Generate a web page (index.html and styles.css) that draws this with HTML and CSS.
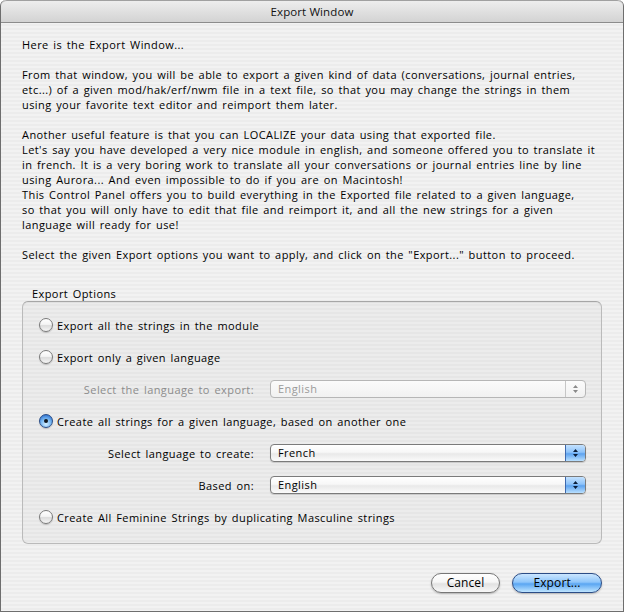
FILE: index.html
```html
<!DOCTYPE html>
<html>
<head>
<meta charset="utf-8">
<title>Export Window</title>
<link rel="stylesheet" href="styles.css">
</head>
<body>
<div class="window">
  <div class="titlebar">Export Window</div>
  <div class="content">
    <p>Here is the Export Window...</p>
    <p>From that window, you will be able to export a given kind of data (conversations, journal entries,<br>etc...) of a given mod/hak/erf/nwm file in a text file, so that you may change the strings in them<br>using your favorite text editor and reimport them later.</p>
    <p>Another useful feature is that you can LOCALIZE your data using that exported file.<br>Let's say you have developed a very nice module in english, and someone offered you to translate it<br>in french. It is a very boring work to translate all your conversations or journal entries line by line<br>using Aurora... And even impossible to do if you are on Macintosh!<br>This Control Panel offers you to build everything in the Exported file related to a given language,<br>so that you will only have to edit that file and reimport it, and all the new strings for a given<br>language will ready for use!</p>
    <p>Select the given Export options you want to apply, and click on the "Export..." button to proceed.</p>

    <div class="group">
      <div class="group-label">Export Options</div>
      <div class="group-box">
        <div class="row"><span class="radio"></span><span class="row-text">Export all the strings in the module</span></div>
        <div class="row"><span class="radio"></span><span class="row-text">Export only a given language</span></div>
        <div class="row field disabled">
          <span class="field-label">Select the language to export:</span>
          <div class="popup"><span class="popup-value">English</span><span class="popup-arrows"><svg width="7" height="10" viewBox="0 0 7 10"><path d="M3.5 1 L6 4 H1 Z M3.5 9 L6 6 H1 Z"/></svg></span></div>
        </div>
        <div class="row"><span class="radio on"></span><span class="row-text">Create all strings for a given language, based on another one</span></div>
        <div class="row field">
          <span class="field-label">Select language to create:</span>
          <div class="popup"><span class="popup-value">French</span><span class="popup-arrows"><svg width="7" height="10" viewBox="0 0 7 10"><path d="M3.5 1 L6 4 H1 Z M3.5 9 L6 6 H1 Z"/></svg></span></div>
        </div>
        <div class="row field">
          <span class="field-label">Based on:</span>
          <div class="popup"><span class="popup-value">English</span><span class="popup-arrows"><svg width="7" height="10" viewBox="0 0 7 10"><path d="M3.5 1 L6 4 H1 Z M3.5 9 L6 6 H1 Z"/></svg></span></div>
        </div>
        <div class="row"><span class="radio"></span><span class="row-text">Create All Feminine Strings by duplicating Masculine strings</span></div>
      </div>
    </div>

    <div class="buttons">
      <button class="btn cancel">Cancel</button>
      <button class="btn default">Export...</button>
    </div>
  </div>
</div>
</body>
</html>
```
FILE: styles.css
```css
html, body {
  margin: 0;
  padding: 0;
  background: #ffffff;
}
body {
  font-family: "Open Sans", "DejaVu Sans", sans-serif;
  font-size: 11px;
  letter-spacing: 0.42px;
  word-spacing: 1.3px;
  color: #000;
}
.window {
  width: 624px;
  height: 612px;
  box-sizing: border-box;
  border: 1px solid #6e6e6e;
  border-top: none;
  border-radius: 6px 6px 0 0;
  overflow: hidden;
  background: repeating-linear-gradient(to bottom, #ececec 0, #ececec 2px, #f2f2f2 2px, #f2f2f2 4px);
}
.titlebar {
  box-sizing: border-box;
  height: 23px;
  line-height: 21px;
  text-align: center;
  font-size: 11.5px;
  letter-spacing: 0.1px;
  word-spacing: 0;
  color: #111;
  background: linear-gradient(to bottom, #ededed, #d3d3d3);
  border-top: 1px solid #a0a0a0;
  border-bottom: 1px solid #8c8c8c;
  border-radius: 6px 6px 0 0;
}
.content {
  padding: 14px 21px 0 21px;
  line-height: 15px;
}
.content p {
  margin: 0 0 15px 0;
  white-space: nowrap;
}
.group {
  margin-top: 24px;
}
.group-label {
  padding-left: 10px;
  line-height: 15px;
}
.group-box {
  border: 1px solid #bababa;
  border-top-color: #a6a6a6;
  border-radius: 6px;
  background: rgba(0, 0, 0, 0.025);
  padding: 7px 15px 10px 16px;
  box-shadow: inset 0 1px 1px rgba(0,0,0,0.06);
}
.row {
  height: 32px;
  display: flex;
  align-items: center;
}
.row-text {
  margin-left: 4px;
}
.radio {
  width: 14px;
  height: 14px;
  box-sizing: border-box;
  border-radius: 50%;
  border: 1px solid #7a7a7a;
  background: linear-gradient(to bottom, #ffffff 0%, #f4f4f4 45%, #dcdcdc 55%, #f6f6f6 100%);
  box-shadow: 0 1px 1px rgba(0,0,0,0.18);
  position: relative;
  flex: none;
}
.radio.on {
  border-color: #294c86;
  background: radial-gradient(circle at 50% 75%, #d4efff 0%, #7ab9f2 45%, #3b7ed6 80%, #2f68b8 100%);
}
.radio.on::after {
  content: "";
  position: absolute;
  left: 4px;
  top: 4px;
  width: 4px;
  height: 4px;
  border-radius: 50%;
  background: #101820;
}
.field-label {
  flex: 1;
  text-align: right;
  margin-right: 16px;
}
.popup {
  width: 316px;
  height: 18px;
  box-sizing: border-box;
  border: 1px solid #7b7b7b;
  border-radius: 4px;
  display: flex;
  overflow: hidden;
  background: linear-gradient(to bottom, #ffffff 0%, #f7f7f7 45%, #e9e9e9 55%, #fbfbfb 100%);
  box-shadow: 0 1px 1px rgba(0,0,0,0.15);
}
.popup-value {
  flex: 1;
  padding-left: 7px;
  line-height: 16px;
}
.popup-arrows {
  width: 19px;
  display: flex;
  align-items: center;
  justify-content: center;
  border-left: 1px solid #3d69ae;
  background: linear-gradient(to bottom, #c4e2ff 0%, #8ec3fa 45%, #5ea3ef 55%, #b9e0ff 100%);
}
.popup-arrows svg {
  fill: #0c1e3a;
}
.disabled .field-label {
  color: #8c8c8c;
}
.disabled .popup {
  border-color: #b6b6b6;
  box-shadow: none;
  background: linear-gradient(to bottom, #fbfbfb, #f1f1f1);
}
.disabled .popup-value {
  color: #9a9a9a;
}
.disabled .popup-arrows {
  border-left-color: #c6c6c6;
  background: transparent;
}
.disabled .popup-arrows svg {
  fill: #8a8a8a;
}
.buttons {
  margin-top: 29px;
  display: flex;
  justify-content: flex-end;
  gap: 12px;
}
.btn {
  height: 20px;
  border-radius: 10px;
  font-family: "Open Sans", "DejaVu Sans", sans-serif;
  font-size: 12px;
  letter-spacing: 0.1px;
  word-spacing: 0;
  line-height: 18px;
  padding: 0;
  color: #000;
  box-shadow: 0 1px 2px rgba(0,0,0,0.25);
}
.cancel {
  width: 69px;
  border: 1px solid #777777;
  background: linear-gradient(to bottom, #ffffff 0%, #f6f6f6 45%, #e2e2e2 55%, #f8f8f8 100%);
}
.default {
  width: 90px;
  border: 1px solid #2c4d86;
  background: linear-gradient(to bottom, #cbe6ff 0%, #8fc6fb 45%, #5aa6f2 55%, #bfe5ff 100%);
}
```
